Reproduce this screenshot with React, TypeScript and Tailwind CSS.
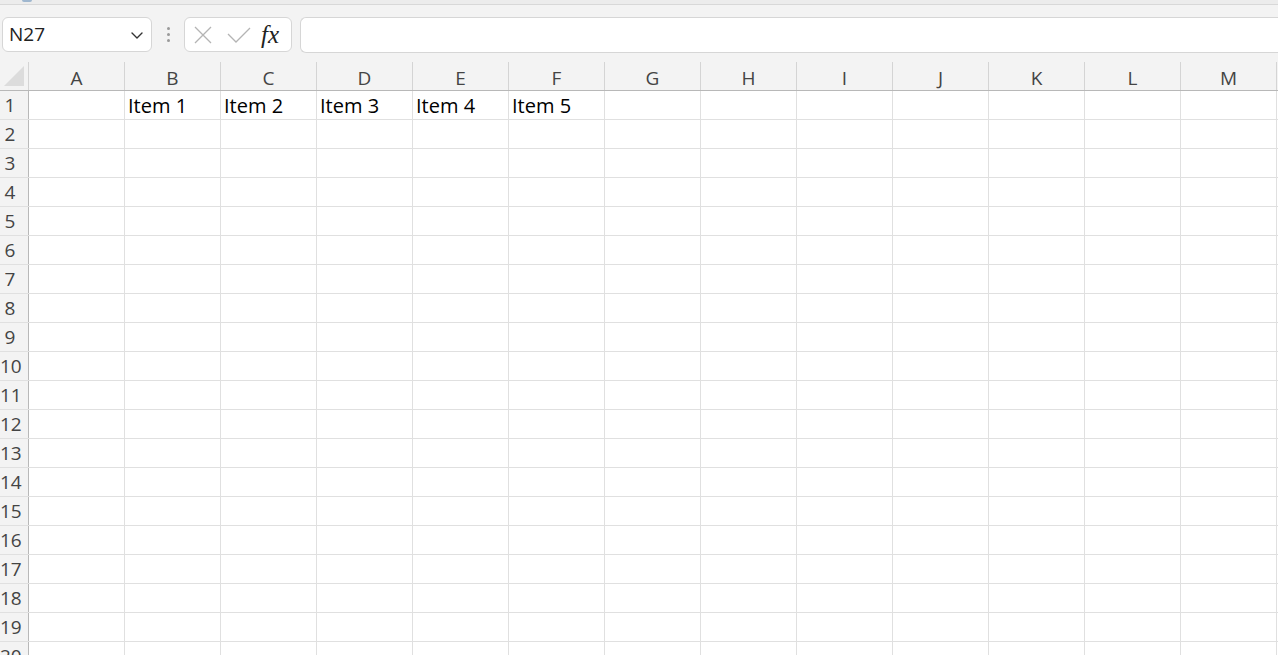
import React from "react";

const COLS = ["A", "B", "C", "D", "E", "F", "G", "H", "I", "J", "K", "L", "M", "N"];
const ROWS = Array.from({ length: 20 }, (_, i) => i + 1);
const ITEMS: Record<string, string> = { B: "Item 1", C: "Item 2", D: "Item 3", E: "Item 4", F: "Item 5" };

export default function App() {
  return (
    <div className="w-[1278px] h-[655px] overflow-hidden bg-white" style={{ fontFamily: '"Open Sans", "Noto Sans", sans-serif' }}>
      {/* top strip */}
      <div className="h-[5px] bg-[#ececec] border-b border-[#d8d8d8] relative">
        <div className="absolute left-[22px] top-0 w-[10px] h-[2px] rounded-b-full bg-[#9fb7cf]" />
      </div>
      <div className="bg-[#f3f3f3]">
        {/* formula bar */}
        <div className="flex items-stretch pt-[12px] h-[47px]">
          <div className="ml-[2px] w-[150px] h-[35px] bg-white border border-[#d6d6d6] rounded-[6px] flex items-center justify-between pl-[6px] pr-[6px]">
            <span className="text-[19px] text-[#222]">N27</span>
            <svg width="16" height="16" viewBox="0 0 16 16" className="text-[#333]">
              <path d="M3 6l5 5 5-5" fill="none" stroke="currentColor" strokeWidth="1.4" strokeLinecap="round" strokeLinejoin="round" />
            </svg>
          </div>
          <div className="w-[32px] flex flex-col items-center justify-center gap-[3px]">
            <div className="w-[3px] h-[3px] rounded-full bg-[#9a9a9a]" />
            <div className="w-[3px] h-[3px] rounded-full bg-[#9a9a9a]" />
            <div className="w-[3px] h-[3px] rounded-full bg-[#9a9a9a]" />
          </div>
          <div className="w-[108px] h-[35px] bg-white border border-[#d6d6d6] rounded-[6px] flex items-center pl-[8px]">
            <svg width="20" height="20" viewBox="0 0 20 20" className="mr-[14px]">
              <path d="M2 2l16 16M18 2L2 18" stroke="#b4b4b4" strokeWidth="1.3" />
            </svg>
            <svg width="24" height="18" viewBox="0 0 24 18" className="mr-[10px]">
              <path d="M1 8l8 8L23 2" fill="none" stroke="#b4b4b4" strokeWidth="1.3" />
            </svg>
            <span className="text-[25px] italic text-[#222] leading-none" style={{ fontFamily: '"Liberation Serif", "DejaVu Serif", serif' }}>
              fx
            </span>
          </div>
          <div className="ml-[8px] flex-1 h-[36px] bg-white border border-[#d6d6d6] border-r-0 rounded-l-[6px]" />
        </div>
        {/* column headers */}
        <div className="flex h-[39px] items-end border-b border-[#b8b8b8]">
          <div className="w-[29px] h-[28px] shrink-0 border-r border-[#d4d4d4] relative">
            <svg width="22" height="22" viewBox="0 0 22 22" className="absolute left-[3px] top-[3px]">
              <path d="M21 1V21H1Z" fill="#dcdcdc" />
            </svg>
          </div>
          {COLS.map((c) => (
            <div key={c} className="w-[96px] h-[28px] shrink-0 border-r border-[#d4d4d4] flex items-center justify-center pt-[4px] text-[19px] text-[#444]">
              {c}
            </div>
          ))}
        </div>
      </div>
      {/* grid */}
      <div>
        {ROWS.map((r) => (
          <div key={r} className="flex h-[29px] border-b border-[#e0e0e0]">
            <div className="w-[29px] shrink-0 bg-[#f3f3f3] border-r border-[#b8b8b8] flex items-center">
              <span className="w-[20px] text-center text-[19px] text-[#444] whitespace-nowrap">{r}</span>
            </div>
            {COLS.map((c) => (
              <div key={c} className="w-[96px] shrink-0 border-r border-[#e0e0e0] flex items-center pl-[3px] pt-[1px] text-[20px] text-black whitespace-nowrap">
                {r === 1 ? ITEMS[c] ?? "" : ""}
              </div>
            ))}
          </div>
        ))}
      </div>
    </div>
  );
}
